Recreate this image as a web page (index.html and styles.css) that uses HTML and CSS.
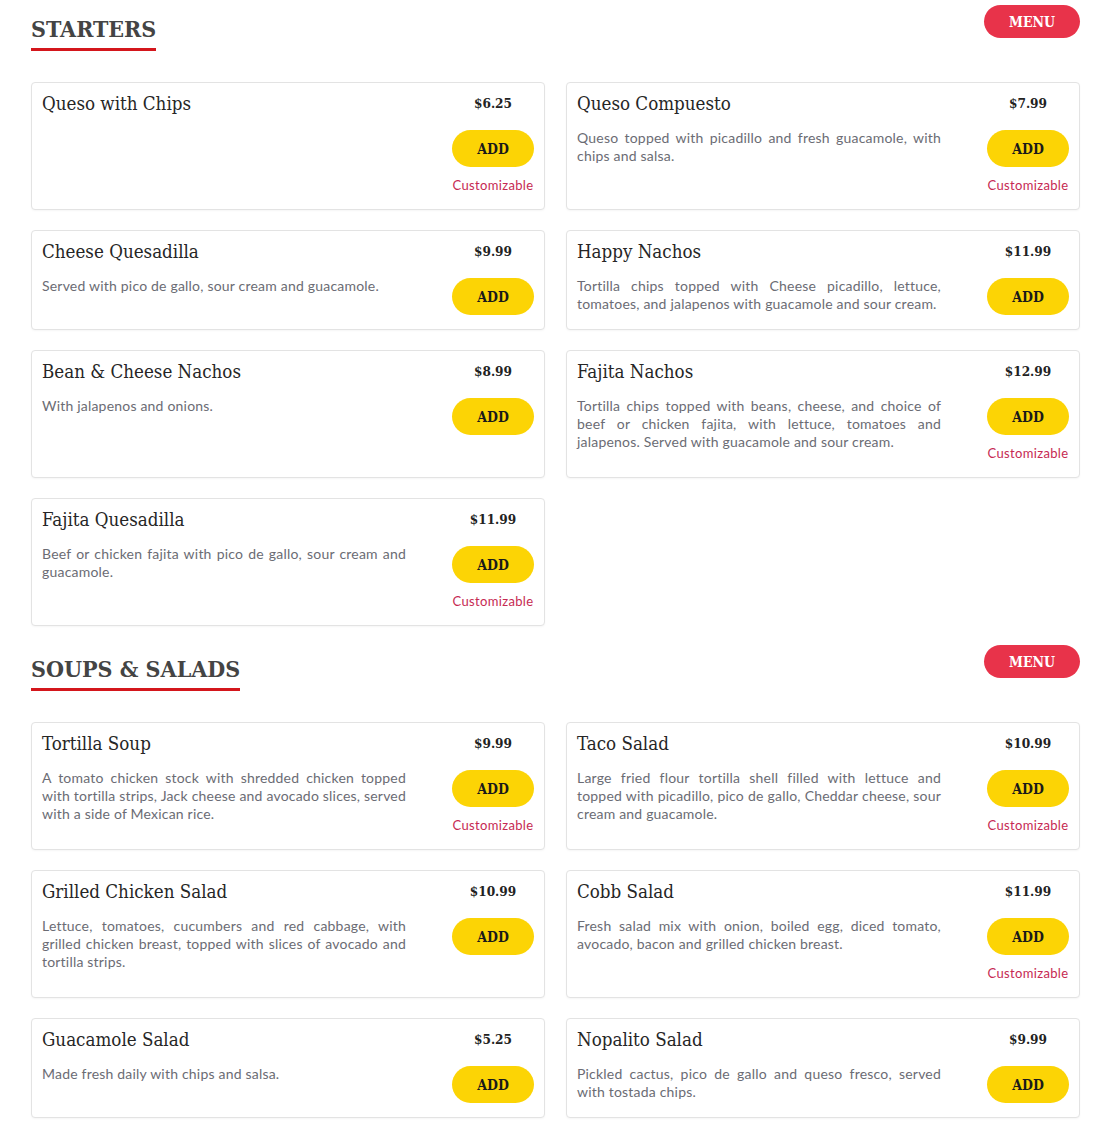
FILE: index.html
```html
<!DOCTYPE html>
<html lang="en">
<head>
<meta charset="utf-8">
<title>Menu</title>
<link rel="stylesheet" href="styles.css">
</head>
<body>
<main class="page">
  <section class="section">
    <header class="section-head">
      <h2 class="section-title">STARTERS</h2>
      <button class="menu-btn">MENU</button>
    </header>
    <div class="grid">
      <article class="card">
        <div class="info">
          <h3 class="name">Queso with Chips</h3>
        </div>
        <div class="side">
          <div class="price">$6.25</div>
          <button class="add">ADD</button>
          <div class="custom">Customizable</div>
        </div>
      </article>
      <article class="card">
        <div class="info">
          <h3 class="name">Queso Compuesto</h3>
          <p class="desc">Queso topped with picadillo and fresh guacamole, with chips and salsa.</p>
        </div>
        <div class="side">
          <div class="price">$7.99</div>
          <button class="add">ADD</button>
          <div class="custom">Customizable</div>
        </div>
      </article>
      <article class="card">
        <div class="info">
          <h3 class="name">Cheese Quesadilla</h3>
          <p class="desc">Served with pico de gallo, sour cream and guacamole.</p>
        </div>
        <div class="side">
          <div class="price">$9.99</div>
          <button class="add">ADD</button>
        </div>
      </article>
      <article class="card">
        <div class="info">
          <h3 class="name">Happy Nachos</h3>
          <p class="desc">Tortilla chips topped with Cheese picadillo, lettuce, tomatoes, and jalapenos with guacamole and sour cream.</p>
        </div>
        <div class="side">
          <div class="price">$11.99</div>
          <button class="add">ADD</button>
        </div>
      </article>
      <article class="card">
        <div class="info">
          <h3 class="name">Bean &amp; Cheese Nachos</h3>
          <p class="desc">With jalapenos and onions.</p>
        </div>
        <div class="side">
          <div class="price">$8.99</div>
          <button class="add">ADD</button>
        </div>
      </article>
      <article class="card">
        <div class="info">
          <h3 class="name">Fajita Nachos</h3>
          <p class="desc">Tortilla chips topped with beans, cheese, and choice of beef or chicken fajita, with lettuce, tomatoes and jalapenos. Served with guacamole and sour cream.</p>
        </div>
        <div class="side">
          <div class="price">$12.99</div>
          <button class="add">ADD</button>
          <div class="custom">Customizable</div>
        </div>
      </article>
      <article class="card">
        <div class="info">
          <h3 class="name">Fajita Quesadilla</h3>
          <p class="desc">Beef or chicken fajita with pico de gallo, sour cream and guacamole.</p>
        </div>
        <div class="side">
          <div class="price">$11.99</div>
          <button class="add">ADD</button>
          <div class="custom">Customizable</div>
        </div>
      </article>
    </div>
  </section>

  <section class="section">
    <header class="section-head">
      <h2 class="section-title">SOUPS &amp; SALADS</h2>
      <button class="menu-btn">MENU</button>
    </header>
    <div class="grid">
      <article class="card">
        <div class="info">
          <h3 class="name">Tortilla Soup</h3>
          <p class="desc">A tomato chicken stock with shredded chicken topped with tortilla strips, Jack cheese and avocado slices, served with a side of Mexican rice.</p>
        </div>
        <div class="side">
          <div class="price">$9.99</div>
          <button class="add">ADD</button>
          <div class="custom">Customizable</div>
        </div>
      </article>
      <article class="card">
        <div class="info">
          <h3 class="name">Taco Salad</h3>
          <p class="desc">Large fried flour tortilla shell filled with lettuce and topped with picadillo, pico de gallo, Cheddar cheese, sour cream and guacamole.</p>
        </div>
        <div class="side">
          <div class="price">$10.99</div>
          <button class="add">ADD</button>
          <div class="custom">Customizable</div>
        </div>
      </article>
      <article class="card">
        <div class="info">
          <h3 class="name">Grilled Chicken Salad</h3>
          <p class="desc">Lettuce, tomatoes, cucumbers and red cabbage, with grilled chicken breast, topped with slices of avocado and tortilla strips.</p>
        </div>
        <div class="side">
          <div class="price">$10.99</div>
          <button class="add">ADD</button>
        </div>
      </article>
      <article class="card">
        <div class="info">
          <h3 class="name">Cobb Salad</h3>
          <p class="desc">Fresh salad mix with onion, boiled egg, diced tomato, avocado, bacon and grilled chicken breast.</p>
        </div>
        <div class="side">
          <div class="price">$11.99</div>
          <button class="add">ADD</button>
          <div class="custom">Customizable</div>
        </div>
      </article>
      <article class="card">
        <div class="info">
          <h3 class="name">Guacamole Salad</h3>
          <p class="desc">Made fresh daily with chips and salsa.</p>
        </div>
        <div class="side">
          <div class="price">$5.25</div>
          <button class="add">ADD</button>
        </div>
      </article>
      <article class="card">
        <div class="info">
          <h3 class="name">Nopalito Salad</h3>
          <p class="desc">Pickled cactus, pico de gallo and queso fresco, served with tostada chips.</p>
        </div>
        <div class="side">
          <div class="price">$9.99</div>
          <button class="add">ADD</button>
        </div>
      </article>
    </div>
  </section>
</main>
</body>
</html>
```

FILE: styles.css
```css
* { box-sizing: border-box; }
html, body { margin: 0; padding: 0; background: #ffffff; }
body { font-family: "Lato", "Noto Sans", sans-serif; color: #2b2b2b; }

.page { padding: 0 30px 0 31px; }

.section { padding-bottom: 14px; }

.section-head {
  display: flex;
  justify-content: space-between;
  align-items: flex-start;
  height: 82px;
}

.slab {
  font-family: "DejaVu Serif Condensed", "DejaVu Serif", serif;
}

.section-title {
  margin: 14px 0 0 0;
  font-family: "DejaVu Serif Condensed", "DejaVu Serif", serif;
  font-stretch: semi-condensed;
  font-weight: bold;
  font-size: 23px;
  line-height: 30px;
  color: #444444;
  padding-bottom: 4px;
  border-bottom: 3px solid #d4161c;
}

.menu-btn {
  margin-top: 5px;
  width: 96px;
  height: 33px;
  border: none;
  border-radius: 17px;
  background: #e8334a;
  color: #ffffff;
  font-family: "DejaVu Serif Condensed", "DejaVu Serif", serif;
  font-stretch: semi-condensed;
  font-weight: bold;
  font-size: 14px;
  padding: 0;
}

.grid {
  display: grid;
  grid-template-columns: 1fr 1fr;
  column-gap: 21px;
  row-gap: 20px;
}

.card {
  display: flex;
  justify-content: space-between;
  border: 1px solid #e3e3e3;
  border-radius: 4px;
  box-shadow: 0 1px 2px rgba(0,0,0,0.04);
  padding: 10px 10px 14px 10px;
  background: #fff;
}

.info { width: 364px; }

.name {
  margin: 0;
  font-family: "DejaVu Serif Condensed", "DejaVu Serif", serif;
  font-stretch: semi-condensed;
  font-weight: normal;
  font-size: 18.6px;
  line-height: 22px;
  color: #262626;
}

.desc {
  margin: 14px 0 0 0;
  font-size: 14px;
  line-height: 18px;
  color: #6b6c74;
  text-align: justify;
  letter-spacing: 0.2px;
}

.side {
  width: 82px;
  display: flex;
  flex-direction: column;
  align-items: center;
}

.price {
  font-family: "DejaVu Serif Condensed", "DejaVu Serif", serif;
  font-stretch: semi-condensed;
  font-weight: bold;
  font-size: 13.5px;
  line-height: 20px;
  color: #222;
}

.add {
  margin-top: 17px;
  width: 82px;
  height: 37px;
  border: none;
  border-radius: 19px;
  background: #fcd405;
  color: #1a1a1a;
  font-family: "DejaVu Serif Condensed", "DejaVu Serif", serif;
  font-stretch: semi-condensed;
  font-weight: bold;
  font-size: 14px;
  padding: 0;
}

.custom {
  margin-top: 9px;
  font-size: 13px;
  line-height: 19px;
  letter-spacing: 0.35px;
  color: #c62a52;
  white-space: nowrap;
}
```
